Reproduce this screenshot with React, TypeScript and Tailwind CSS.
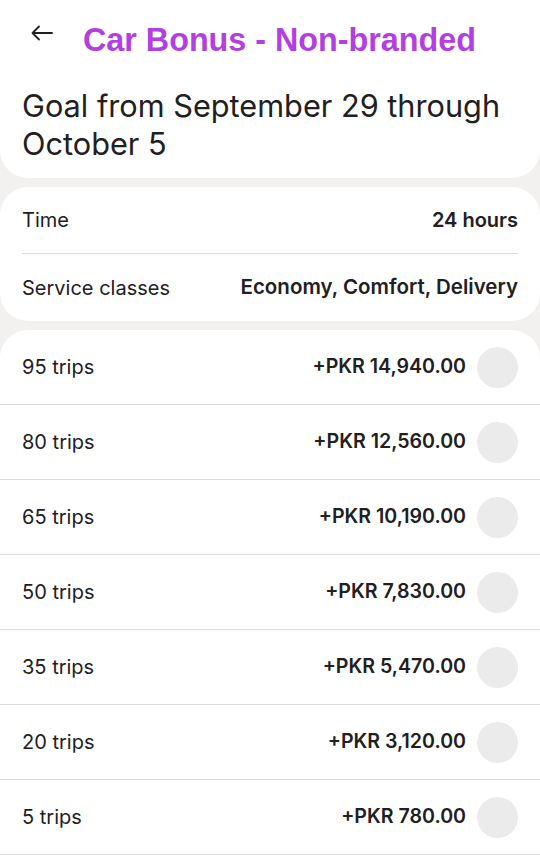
const goals = [
  { trips: '95 trips', amount: '+PKR 14,940.00' },
  { trips: '80 trips', amount: '+PKR 12,560.00' },
  { trips: '65 trips', amount: '+PKR 10,190.00' },
  { trips: '50 trips', amount: '+PKR 7,830.00' },
  { trips: '35 trips', amount: '+PKR 5,470.00' },
  { trips: '20 trips', amount: '+PKR 3,120.00' },
  { trips: '5 trips', amount: '+PKR 780.00' },
];

function BackArrow() {
  return (
    <svg width="22" height="16" viewBox="0 0 22 16" fill="none" stroke="#21201f" strokeWidth="1.8" strokeLinecap="round" strokeLinejoin="round">
      <path d="M21 8H1.5M8 1.5L1.5 8L8 14.5" />
    </svg>
  );
}

export default function App() {
  return (
    <div className="min-h-[868px] bg-[#f2f1ef] text-[#21201f] font-['Inter',sans-serif] flex flex-col gap-[9px]">
      <div className="bg-white rounded-b-[28px] pb-[15px]">
        <div className="flex items-center h-[80px] pl-[31px]">
          <span className="mb-[14px]">
            <BackArrow />
          </span>
          <h1 className="ml-[30px] text-[32.3px] font-bold text-[#b23fe3] font-['Liberation_Sans',Arial,sans-serif]">
            Car Bonus - Non-branded
          </h1>
        </div>
        <h2 className="mt-[7px] px-[22px] text-[30.7px] leading-[38px] font-normal">
          Goal from September 29 through October 5
        </h2>
      </div>

      <div className="bg-white rounded-[28px] px-[22px]">
        <div className="flex items-center justify-between h-[67px] border-b border-[#dcdcdc] text-[20px]">
          <span>Time</span>
          <span className="font-semibold">24 hours</span>
        </div>
        <div className="flex items-center justify-between h-[67px] text-[20px]">
          <span>Service classes</span>
          <span className="font-semibold text-[20.5px]">Economy, Comfort, Delivery</span>
        </div>
      </div>

      <div className="bg-white rounded-t-[28px] flex-1">
        {goals.map((goal) => (
          <div
            key={goal.trips}
            className="flex items-center h-[75px] border-b border-[#dcdcdc] pl-[22px] pr-[22px] text-[20px]"
          >
            <span className="flex-1">{goal.trips}</span>
            <span className="font-semibold text-[19.6px]">{goal.amount}</span>
            <span className="ml-[11px] size-[41px] rounded-full bg-[#ebebeb]" />
          </div>
        ))}
      </div>
    </div>
  );
}
